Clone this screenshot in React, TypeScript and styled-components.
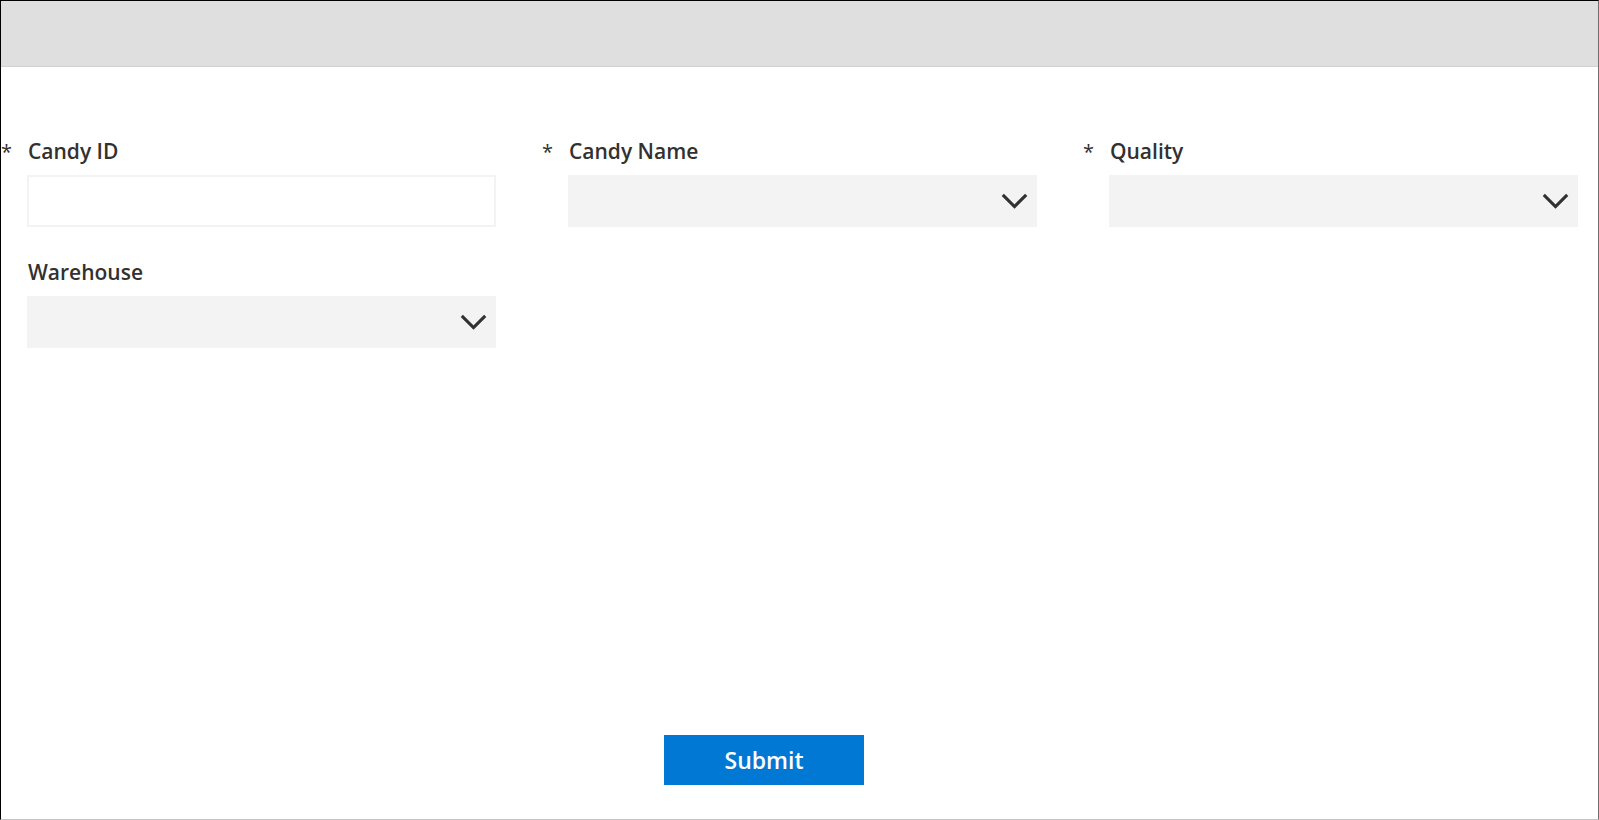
import React from "react";
import styled, { createGlobalStyle } from "styled-components";

const GlobalStyle = createGlobalStyle`
  html, body {
    margin: 0;
    padding: 0;
    background: #ffffff;
  }
  * { box-sizing: border-box; }
  body {
    font-family: "Open Sans", "Noto Sans", "Liberation Sans", sans-serif;
    color: #323130;
  }
`;

const Frame = styled.div`
  width: 1599px;
  height: 820px;
  display: flex;
  flex-direction: column;
  border-top: 1px solid #000000;
  border-left: 1px solid #000000;
  border-right: 1px solid #6f6f6f;
  border-bottom: 1px solid #c4c4c4;
  background: #ffffff;
  overflow: hidden;
`;

const Header = styled.header`
  height: 66px;
  flex: none;
  background: #dfdfdf;
  border-bottom: 1px solid #d0d0d0;
`;

const Form = styled.form`
  flex: 1;
  display: flex;
  flex-direction: column;
`;

const FieldGrid = styled.div`
  display: grid;
  grid-template-columns: 541px 541px 1fr;
  row-gap: 31px;
  padding-top: 70px;
`;

const Field = styled.div`
  display: grid;
  grid-template-columns: 26px 469px;
  grid-template-rows: auto auto;
  row-gap: 9px;
`;

const Required = styled.span`
  padding-left: 0;
  font-size: 20px;
  line-height: 29px;
  color: #323130;
`;

const Label = styled.label`
  padding-left: 1px;
  font-size: 21px;
  line-height: 29px;
  font-weight: 600;
  color: #323130;
  grid-column: 2;
`;

const Control = styled.div`
  grid-column: 2;
  height: 52px;
`;

const TextInput = styled.input`
  width: 100%;
  height: 100%;
  border: 2px solid #f3f3f3;
  background: #ffffff;
  outline: none;
  padding: 0 10px;
  font: inherit;
  font-size: 21px;
`;

const Dropdown = styled.div`
  width: 100%;
  height: 100%;
  background: #f3f3f3;
  display: flex;
  align-items: center;
  justify-content: flex-end;
  padding-right: 9px;
  cursor: pointer;
`;

const Footer = styled.div`
  margin-top: auto;
  padding-left: 663px;
  padding-bottom: 34px;
  display: flex;
`;

const SubmitButton = styled.button`
  width: 200px;
  height: 50px;
  border: none;
  background: #0078d4;
  color: #ffffff;
  font-family: "Open Sans", "Noto Sans", "Liberation Sans", sans-serif;
  font-size: 23px;
  font-weight: 600;
  cursor: pointer;
  padding: 0;
`;

const Chevron = () => (
  <svg width="27" height="16" viewBox="0 0 27 16" aria-hidden="true">
    <polyline
      points="1.8,1.8 13.5,13.5 25.2,1.8"
      fill="none"
      stroke="#323130"
      strokeWidth="3.1"
    />
  </svg>
);

type FieldDef = { label: string; required?: boolean; kind: "text" | "select" };

const fields: FieldDef[] = [
  { label: "Candy ID", required: true, kind: "text" },
  { label: "Candy Name", required: true, kind: "select" },
  { label: "Quality", required: true, kind: "select" },
  { label: "Warehouse", kind: "select" },
];

export default function App() {
  return (
    <>
      <GlobalStyle />
      <Frame>
        <Header />
        <Form onSubmit={(e) => e.preventDefault()}>
          <FieldGrid>
            {fields.map((f) => (
              <Field key={f.label}>
                <Required>{f.required ? "*" : ""}</Required>
                <Label>{f.label}</Label>
                <Control>
                  {f.kind === "text" ? (
                    <TextInput type="text" />
                  ) : (
                    <Dropdown>
                      <Chevron />
                    </Dropdown>
                  )}
                </Control>
              </Field>
            ))}
          </FieldGrid>
          <Footer>
            <SubmitButton type="submit">Submit</SubmitButton>
          </Footer>
        </Form>
      </Frame>
    </>
  );
}
